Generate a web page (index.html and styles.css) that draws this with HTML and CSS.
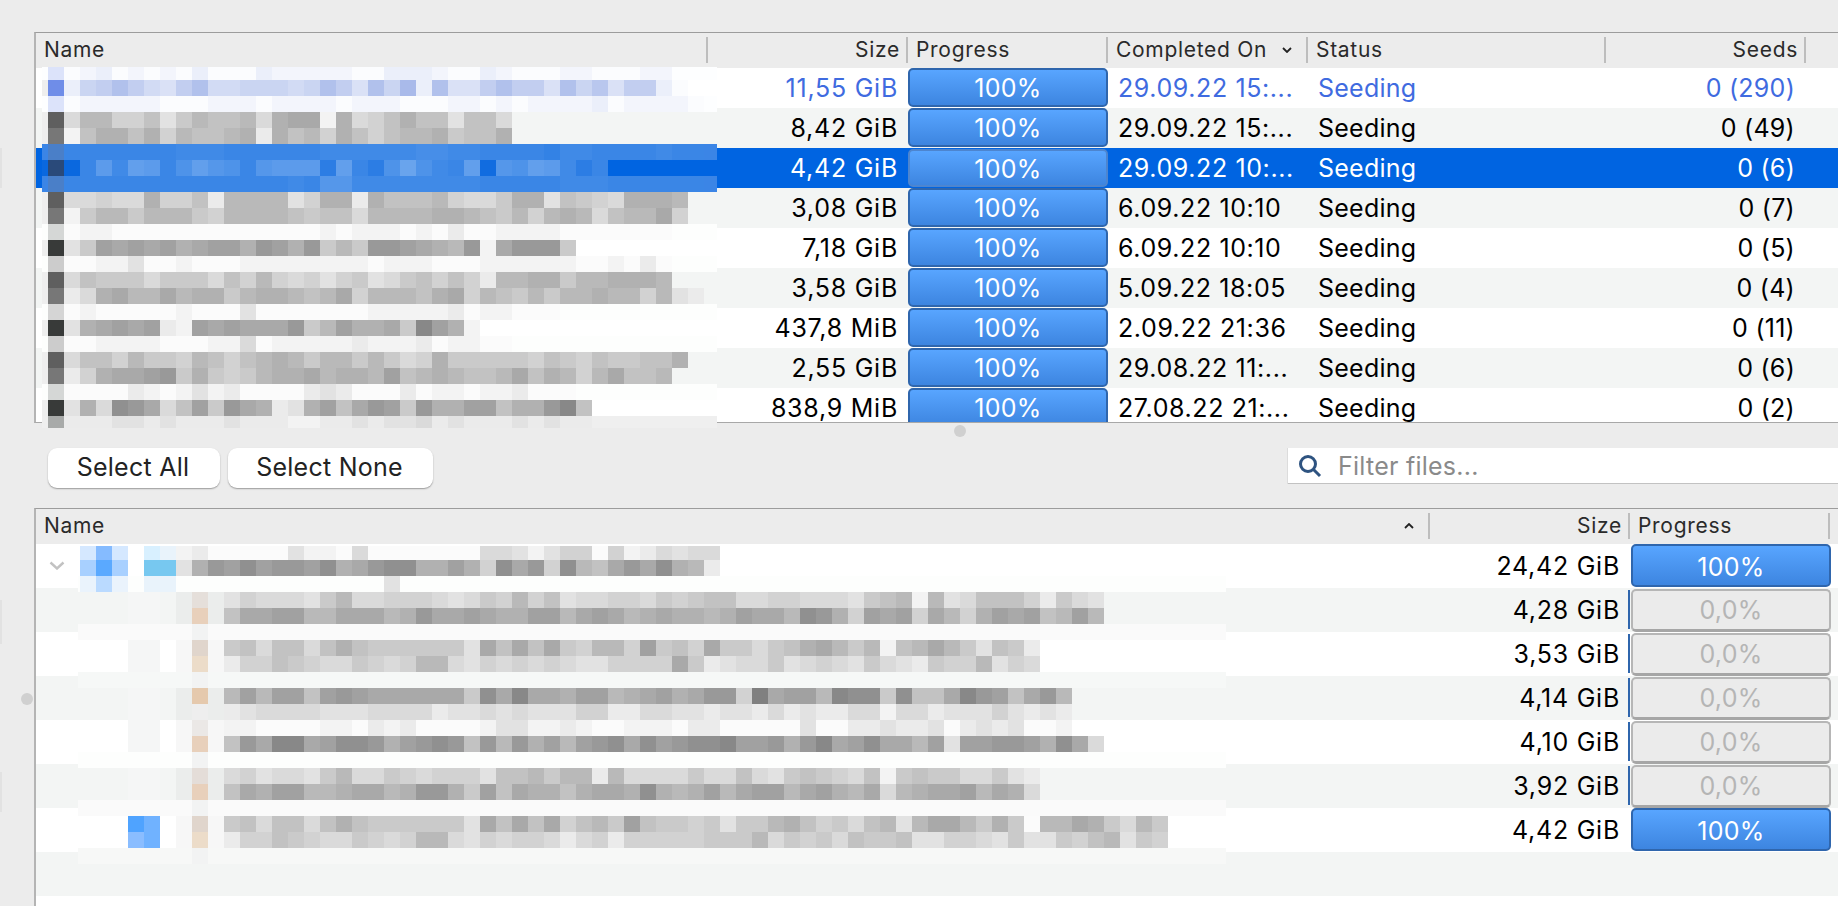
FILE: index.html
```html
<!DOCTYPE html>
<html lang="en">
<head>
<meta charset="utf-8">
<title>Torrents</title>
<link rel="stylesheet" href="styles.css">
</head>
<body>
<section class="table torrents">
  <div class="head cols-t">
    <div class="th sep">Name</div>
    <div class="th sep right">Size</div>
    <div class="th sep">Progress</div>
    <div class="th sep sorted">Completed On
      <svg class="chev" viewBox="0 0 10 6"><path d="M1 1l4 4 4-4"/></svg>
    </div>
    <div class="th sep">Status</div>
    <div class="th sep right">Seeds</div>
  </div>
  <div class="row cols-t blue"><div></div><div class="num">11,55 GiB</div><div class="bar">100%</div><div class="date">29.09.22 15:...</div><div class="status">Seeding</div><div class="seeds">0 (290)</div></div>
  <div class="row cols-t alt"><div></div><div class="num">8,42 GiB</div><div class="bar">100%</div><div class="date">29.09.22 15:...</div><div class="status">Seeding</div><div class="seeds">0 (49)</div></div>
  <div class="row cols-t sel"><div></div><div class="num">4,42 GiB</div><div class="bar">100%</div><div class="date">29.09.22 10:...</div><div class="status">Seeding</div><div class="seeds">0 (6)</div></div>
  <div class="row cols-t alt"><div></div><div class="num">3,08 GiB</div><div class="bar">100%</div><div class="date">6.09.22 10:10</div><div class="status">Seeding</div><div class="seeds">0 (7)</div></div>
  <div class="row cols-t"><div></div><div class="num">7,18 GiB</div><div class="bar">100%</div><div class="date">6.09.22 10:10</div><div class="status">Seeding</div><div class="seeds">0 (5)</div></div>
  <div class="row cols-t alt"><div></div><div class="num">3,58 GiB</div><div class="bar">100%</div><div class="date">5.09.22 18:05</div><div class="status">Seeding</div><div class="seeds">0 (4)</div></div>
  <div class="row cols-t"><div></div><div class="num">437,8 MiB</div><div class="bar">100%</div><div class="date">2.09.22 21:36</div><div class="status">Seeding</div><div class="seeds">0 (11)</div></div>
  <div class="row cols-t alt"><div></div><div class="num">2,55 GiB</div><div class="bar">100%</div><div class="date">29.08.22 11:...</div><div class="status">Seeding</div><div class="seeds">0 (6)</div></div>
  <div class="row cols-t"><div></div><div class="num">838,9 MiB</div><div class="bar">100%</div><div class="date">27.08.22 21:...</div><div class="status">Seeding</div><div class="seeds">0 (2)</div></div>
</section>

<div class="toolbar">
  <button class="btn select-all">Select All</button>
  <button class="btn select-none">Select None</button>
  <div class="filter">
    <svg class="search" viewBox="0 0 24 24"><circle cx="10" cy="10" r="7.5"/><path d="M15.5 15.5L22 22"/></svg>
    <span>Filter files...</span>
  </div>
</div>

<section class="table files">
  <div class="head cols-f">
    <div class="th sep sorted name-f">Name
      <svg class="chev up" viewBox="0 0 10 6"><path d="M1 5l4-4 4 4"/></svg>
    </div>
    <div class="th sep right">Size</div>
    <div class="th sep">Progress</div>
  </div>
  <div class="row file cols-f"><div class="twist"><svg viewBox="0 0 16 9"><path d="M1.5 1.5L8 7.5l6.5-6"/></svg></div><div class="num">24,42 GiB</div><div class="bar">100%</div></div>
  <div class="row file cols-f alt"><div></div><div class="num">4,28 GiB</div><div class="bar none">0,0%</div></div>
  <div class="row file cols-f"><div></div><div class="num">3,53 GiB</div><div class="bar none">0,0%</div></div>
  <div class="row file cols-f alt"><div></div><div class="num">4,14 GiB</div><div class="bar none">0,0%</div></div>
  <div class="row file cols-f"><div></div><div class="num">4,10 GiB</div><div class="bar none">0,0%</div></div>
  <div class="row file cols-f alt"><div></div><div class="num">3,92 GiB</div><div class="bar none">0,0%</div></div>
  <div class="row file cols-f"><div></div><div class="num">4,42 GiB</div><div class="bar">100%</div></div>
  <div class="row file cols-f alt"></div>
</section>

<canvas id="mosaic" class="mosaic" width="1838" height="906"></canvas>
<i class="handle handle-h"></i>
<i class="handle handle-v"></i>
<i class="edge edge-1"></i>
<i class="edge edge-2"></i>
<i class="edge edge-3"></i>
<script src="mosaic.js"></script>
</body>
</html>
```
FILE: styles.css
```css
* { box-sizing: border-box; }
html, body { margin: 0; height: 906px; overflow: hidden; }
body {
  position: relative;
  background: #ececec;
  padding: 32px 0 0 34px;
  display: flex;
  flex-direction: column;
  font-family: Inter, "Liberation Sans", sans-serif;
  font-size: 25px;
  color: #000;
}
.table {
  border-top: 1px solid #9c9c9c;
  border-left: 2px solid #b4b4b4;
  background: #fff;
  overflow: hidden;
}
.torrents { height: 391px; border-bottom: 1px solid #a8a8a8; flex: none; }
.files { flex: 1; }
.cols-t { display: grid; grid-template-columns: 672px 200px 200px 200px 298px 200px 1fr; }
.cols-f { display: grid; grid-template-columns: 1394px 200px 200px 1fr; }
.head { height: 35px; background: #ececec; }
.th {
  position: relative;
  height: 35px;
  padding: 0 8px;
  line-height: 33px;
  font-size: 21px;
  letter-spacing: 0.7px;
  color: #2a2a2a;
  white-space: nowrap;
}
.th.right { text-align: right; padding-right: 8px; }
.th.sep::after {
  content: "";
  position: absolute;
  right: 0;
  top: 4px;
  height: 26px;
  width: 2px;
  background: #bdbdbd;
}
.chev { position: absolute; right: 16px; top: 14px; width: 10px; height: 6px; fill: none; stroke: #222; stroke-width: 1.8; }
.chev.up { right: 16px; top: 14px; }
.row { height: 40px; background: #fff; align-items: center; white-space: nowrap; letter-spacing: 0.25px; }
.row.file { height: 44px; }
.row.alt { background: #f3f5f4; }
.row.sel { background: #0064e1; color: #fff; }
.row.blue { color: #3f6be0; }
.num { text-align: right; padding-right: 10px; letter-spacing: 0.75px; }
.date { padding-left: 10px; letter-spacing: 0.6px; }
.status { padding-left: 10px; }
.seeds { text-align: right; padding-right: 11px; }
.bar {
  align-self: start;
  height: 39px;
  margin-left: 0;
  border: 2px solid #2f66ad;
  border-radius: 5px;
  background: linear-gradient(#58a5ff, #3d85e0);
  color: #fff;
  text-align: center;
  line-height: 37px;
}
.file .bar { height: 43px; line-height: 42px; margin-left: 1px; margin-right: -1px; }
.sel .bar { border-color: #4d85cf; margin-top: 1px; height: 38px; }
.bar.none {
  position: relative;
  background: #ebebeb;
  border: 2px solid #b6b6b6;
  border-bottom: 3px solid #a6a6a6;
  color: #b5b5b5;
  margin-top: 1px;
  line-height: 39px;
}
.bar.none::before {
  content: "";
  position: absolute;
  left: -5px;
  top: -1px;
  bottom: 0;
  width: 2px;
  background: #2f66ad;
}
.toolbar {
  flex: none;
  height: 85px;
  padding: 25px 0 0 14px;
  display: flex;
  align-items: flex-start;
}
.btn {
  flex: none;
  height: 40px;
  padding: 0 2px 2px 0;
  border: 0;
  border-radius: 9px;
  background: #fff;
  box-shadow: 0 1px 1.5px rgba(0,0,0,.35);
  font: inherit;
  letter-spacing: 0.25px;
  color: #222;
}
.select-all { width: 172px; }
.select-none { width: 205px; margin-left: 8px; }
.filter {
  flex: none;
  margin-left: 855px;
  width: 560px;
  height: 36px;
  display: flex;
  align-items: center;
  padding-left: 10px;
  background: #fff;
  border-bottom: 1.5px solid #c2c2c2;
  box-shadow: -1px 0 0 #dcdcdc;
  color: #8a8a8a;
  letter-spacing: 0.25px;
}
.search { width: 24px; height: 24px; fill: none; stroke: #2e5380; stroke-width: 3; margin-right: 16px; }
.twist { padding-left: 13px; display: flex; align-items: center; }
.twist svg { width: 16px; height: 9px; margin-top: -2px; fill: none; stroke: #c2c2c2; stroke-width: 2.4; }
.mosaic { position: absolute; left: 0; top: 0; pointer-events: none; }
.handle { position: absolute; width: 12px; height: 12px; border-radius: 50%; background: #d0d0d0; }
.handle-h { left: 954px; top: 425px; }
.handle-v { left: 21px; top: 693px; }
.edge { position: absolute; left: 0; width: 2px; background: #e2e2e2; }
.edge-1 { top: 148px; height: 40px; }
.edge-2 { top: 600px; height: 44px; }
.edge-3 { top: 772px; height: 40px; }
```
FILE: mosaic.js
```js
// Pixelated (censored) name column: coarse 16px cells.
// Digits 0-f are gray levels; tints recolour them.
var ctx = document.getElementById('mosaic').getContext('2d');

function gray(h) { return Math.min(255, Math.round(128 + h * 8.2)); }
function cellColor(ch, tint) {
  var g = gray(parseInt(ch, 16));
  if (tint === 'blue') {
    return 'rgb(' + g + ',' + Math.round(g + (255 - g) * 0.2) + ',' + Math.round(g + (255 - g) * 0.75) + ')';
  }
  if (tint === 'sel') {
    var t = parseInt(ch, 16) / 15;
    return 'rgb(' + Math.round(10 + t * 102) + ',' + Math.round(104 + t * 64) + ',' + Math.round(223 + t * 15) + ')';
  }
  return 'rgb(' + g + ',' + g + ',' + g + ')';
}
function strip(o) {
  var h = o.h || 16;
  if (o.fill) { ctx.fillStyle = o.fill[2]; ctx.fillRect(o.fill[0], o.y, o.fill[1] - o.fill[0], h); }
  var x = o.x;
  if (o.first) { ctx.fillStyle = o.first; ctx.fillRect(x, o.y, 16, h); x += 16; }
  for (var i = 0; i < o.d.length; i++) {
    if (o.d[i] !== '.') { ctx.fillStyle = cellColor(o.d[i], o.t); ctx.fillRect(x + i * 16, o.y, 16, h); }
  }
}

var LIGHT = [42, 717, '#fdfefd'], STUB = [42, 48, '#eeeeee'];
[
  {y:67,h:13,x:48,first:'#dce3fa',t:'blue',fill:[42,717,'#fdfeff'],d:'fedfefefdfffdeeeeeffdddeffdefffeefffeefd'.slice(0,38)},
  {y:80,x:48,first:'#6f8de8',t:'blue',fill:STUB,d:'d9868ab86aa999a968b695d6bb8688b697b88d'+'f'},
  {y:96,x:48,first:'#dce3fa',t:'blue',fill:[42,717,'#fdfeff'],d:'feeeeefffeeefeeeefeeefffeefefeeeedfeeeef'},
  {y:112,x:48,first:'#5f5f5f',fill:STUB,d:'b77aa8c97887b655e6ba8688c88b'},
  {y:128,x:48,first:'#777777',fill:STUB,d:'e86686a78876d687a68a87769886'},
  {y:144,x:48,first:'#4a7fc8',t:'sel',fill:[42,717,'#3b85e6'],d:'7777777888777777888888998877776887777877'},
  {y:160,x:48,first:'#2a4a7a',t:'sel',fill:[42,48,'#0a68df'],d:'07c8dc7adba7bccc5d75aea87d1badc857'},
  {y:176,x:48,first:'#4a7fc8',t:'sel',fill:[42,717,'#3b85e6'],d:'7777777777777787bb8888888877777888777777'},
  {y:192,x:48,first:'#5f5f5f',fill:STUB,d:'bbabb6aa8d7777ca66d68887abb966c89ab6667'},
  {y:208,x:48,first:'#777777',fill:STUB,d:'e97797779a77778988b7777667897a767b8775a'},
  {y:224,x:48,first:'#d5d7d6',fill:LIGHT,d:'feefffffffffffffefeeefefdffeeeefffffff'},
  {y:240,x:48,first:'#383a39',fill:STUB,d:'c9454546544634639793345673e53339'},
  {y:256,x:48,first:'#cccccc',fill:LIGHT,d:'ffeecffefffeeeeeeeefeeefffeeeeeeffefdf'},
  {y:272,x:48,first:'#5f5f5f',fill:STUB,d:'b8999b999b8a7abaca9cb98a8ad77669776667'},
  {y:288,x:48,first:'#777777',fill:STUB,d:'db6577576697667875a777865a7897977677a7cd'},
  {y:304,x:48,first:'#d5d5d5',fill:LIGHT,d:'fefffffefffcfffffffeeeeedfeefff'},
  {y:320,x:48,first:'#383a39',fill:STUB,d:'c65454de45455539746659146e'},
  {y:336,x:48,first:'#cccccc',fill:LIGHT,d:'ffeeeefffeebfeeeeedeeedfeeff'},
  {y:352,x:48,first:'#5f5f5f',fill:STUB,d:'b88a799a78a8767977979ba699999a89a899886'},
  {y:368,x:48,first:'#777777',fill:STUB,d:'da65543969a976657667487678875867a75887'},
  {y:384,x:48,first:'#d5d7d6',fill:LIGHT,d:'ffffdefecedffffdcdfffdfeefeedfff'},
  {y:400,x:48,first:'#383a39',fill:STUB,d:'c6b235b849356dc648534936644866318'},
  {y:416,h:12,x:48,first:'#a8aaa9',fill:[42,717,'#efefef'],d:'dddccdcdddcdddeeddcdccbdcdddcdcdd'}
].forEach(strip);

// Lower table: title row
[
  {y:546,h:14,x:176,d:'edfffffceefbfffffffbbcecaafaedbcbb'},
  {y:560,x:176,d:'c634243342653226646a253a278535267d'},
  {y:576,x:80,fill:[78,1226,'#fdfefd'],d:''},
  {y:576,x:384,d:'c'}
].forEach(strip);

var px = function (x, y, h, c) { ctx.fillStyle = c; ctx.fillRect(x, y, 16, h); };
[[80,'#d5e8ff'],[96,'#85bbff'],[112,'#d5e8ff'],[144,'#d8f0ff'],[160,'#e9f3fb']].forEach(function (c) { px(c[0], 546, 14, c[1]); });
[[80,'#a8d0ff'],[96,'#5aa9ff'],[112,'#a8d0ff'],[144,'#77c8f0'],[160,'#77c8f0']].forEach(function (c) { px(c[0], 560, 16, c[1]); });
[[80,'#eaf3fc'],[96,'#badaff'],[112,'#eaf3fc'],[144,'#e9f3fb'],[160,'#e9f3fb']].forEach(function (c) { px(c[0], 576, 16, c[1]); });

// Lower table: file rows. [y, peach colour, 30 cells up to x=704, the cells after it]
[
  [592,'#e5dfda','cabbbc97bbaaabcb9a7a8cbbaab9a9','88bbaabbbc987e7cb888ad9bc'],
  [608,'#e8d0bb','855447755576355456644754576566','764557236a454a57a64548747'],
  [640,'#e0d5cc','98b88b868999999c585859a77a498a','599b9865797e87579c89d'],
  [656,'#ecdcc9','daa89abb9aba77bcabababccaaaa59','dcbb9cbabc9bcd9aa7cab'],
  [688,'#e5c9ad','747448434555555925155644765465','33a05447122928851348537'],
  [704,'#eeeeee','dcbbbbcccbbbbdccbcbcccaaddbbcc','dccdbdcddbbebbdcccacdcd'],
  [720,'#ebe8e6','eeffffeefdedffffecceedeffeeefd','dfffffcffddcddcfdcdcffe'],
  [736,'#e8d0bb','835115422364323837364743252432','214436315425574c44334625b'],
  [768,'#e4ddd8','bacbbc97bb9abaaac887977d7bbbb9','bb8bc989ab8e9899bb9cd'],
  [784,'#e8d0bb','856447765576336948566865562676','47544754675b76554756b'],
  [816,'#e0d5cc','98b88b868999999c58585a8794899a','9c99768a9b87c7557969f77569b79'],
  [832,'#ecdcc9','daa89abb9aba77bcabaabdbadaaaaa','9997b9a9b8998ccaabc9cc9a87c9a']
].forEach(function (r) {
  var y = r[0];
  px(128, y, 16, '#f5f6f6'); px(144, y, 16, '#f5f6f6'); px(176, y, 16, 'rgba(0,0,0,.03)');
  px(192, y, 16, r[1]); px(208, y, 16, 'rgba(0,0,0,.03)');
  strip({y: y, x: 224, d: r[2] + r[3]});
});
[[624,'#fafafa'],[672,'#f6f8f7'],[752,'#fdfefd'],[800,'#fafafa'],[848,'#f7f8f7']].forEach(function (b) {
  ctx.fillStyle = b[1]; ctx.fillRect(78, b[0], 1148, 16);
  px(192, b[0], 16, '#f2f3f3');
});
[[128,816,'#4fa3ff'],[144,816,'#70b2ff'],[128,832,'#8abdff'],[144,832,'#70b2ff']].forEach(function (c) { px(c[0], c[1], 16, c[2]); });
```
